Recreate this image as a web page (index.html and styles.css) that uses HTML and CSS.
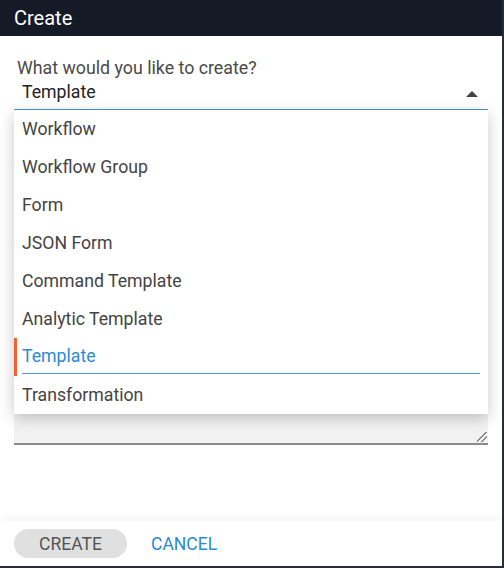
FILE: index.html
```html
<!DOCTYPE html>
<html>
<head>
<meta charset="utf-8">
<link rel="stylesheet" href="styles.css">
</head>
<body>
<div class="dialog">
  <div class="header">Create</div>
  <div class="content">
    <div class="field">
      <div class="label">What would you like to create?</div>
      <div class="value-row">
        <span class="value">Template</span>
        <span class="arrow"></span>
      </div>
    </div>
    <div class="lower">
      <div class="textarea"><span class="grip"></span></div>
      <ul class="menu">
        <li class="item">Workflow</li>
        <li class="item">Workflow Group</li>
        <li class="item">Form</li>
        <li class="item">JSON Form</li>
        <li class="item">Command Template</li>
        <li class="item">Analytic Template</li>
        <li class="item selected"><span class="item-text">Template</span></li>
        <li class="item">Transformation</li>
      </ul>
    </div>
  </div>
  <div class="footer">
    <button class="btn btn-create">CREATE</button>
    <button class="btn btn-cancel">CANCEL</button>
  </div>
</div>
</body>
</html>
```

FILE: styles.css
```css
* { box-sizing: border-box; }
html, body { margin: 0; padding: 0; background: #fff; }
body { font-family: Roboto, "Noto Sans", sans-serif; }

.dialog {
  width: 504px;
  height: 568px;
  display: flex;
  flex-direction: column;
  border-right: 2px solid #2a2d33;
  border-bottom: 2px solid #2a2d33;
  background: #fff;
  overflow: hidden;
}

.header {
  height: 36px;
  flex: none;
  background: #151a27;
  color: #fff;
  font-size: 20px;
  line-height: 36px;
  padding-left: 14px;
}

.content {
  flex: 1;
  padding: 20px 14px 0 14px;
  display: flex;
  flex-direction: column;
}

.field {
  border-bottom: 1px solid #4a93dc;
}

.label {
  font-size: 17.8px;
  color: #4a4a4a;
  padding-left: 3px;
  line-height: 23px;
}

.value-row {
  display: flex;
  align-items: center;
  justify-content: space-between;
  height: 30px;
  padding: 0 10px 4px 8px;
}

.value {
  font-size: 17.7px;
  color: #222;
}

.arrow {
  width: 0;
  height: 0;
  border-left: 6px solid transparent;
  border-right: 6px solid transparent;
  border-bottom: 6px solid #444;
  margin-top: 4px;
}

.lower {
  position: relative;
  padding-top: 8px;
}

.textarea {
  position: relative;
  height: 327px;
  background: #f2f2f2;
  border-bottom: 2px solid #8a8a8a;
}

.grip {
  position: absolute;
  right: 1px;
  bottom: 1px;
  width: 10px;
  height: 10px;
  background-image:
    linear-gradient(135deg, transparent 0 44%, #888 44% 52%, transparent 52% 70%, #888 70% 78%, transparent 78%);
}

.menu {
  position: absolute;
  top: 0;
  left: 0;
  right: 0;
  margin: 0;
  padding: 0;
  list-style: none;
  background: #fff;
  box-shadow: 0 4px 14px rgba(0, 0, 0, 0.22);
}

.item {
  height: 38px;
  line-height: 38px;
  padding: 0 8px;
  font-size: 17.7px;
  color: #444;
}

.item.selected {
  border-left: 3px solid #f06030;
  padding-left: 5px;
  color: #2a8ad6;
}

.item-text {
  display: block;
  height: 36px;
  line-height: 36px;
  border-bottom: 1px solid #4a96e0;
}

.footer {
  height: 45px;
  flex: none;
  display: flex;
  align-items: center;
  gap: 24px;
  padding: 0 14px;
  background: #fff;
  box-shadow: 0 -2px 10px rgba(0, 0, 0, 0.05);
}

.btn {
  font-family: Roboto, "Noto Sans", sans-serif;
  font-size: 17.5px;
  border: none;
  background: none;
  padding: 0;
  cursor: pointer;
}

.btn-create {
  width: 113px;
  height: 29px;
  border-radius: 15px;
  background: #e0e0e0;
  color: #555;
}

.btn-cancel {
  color: #2a8ad6;
}
```
